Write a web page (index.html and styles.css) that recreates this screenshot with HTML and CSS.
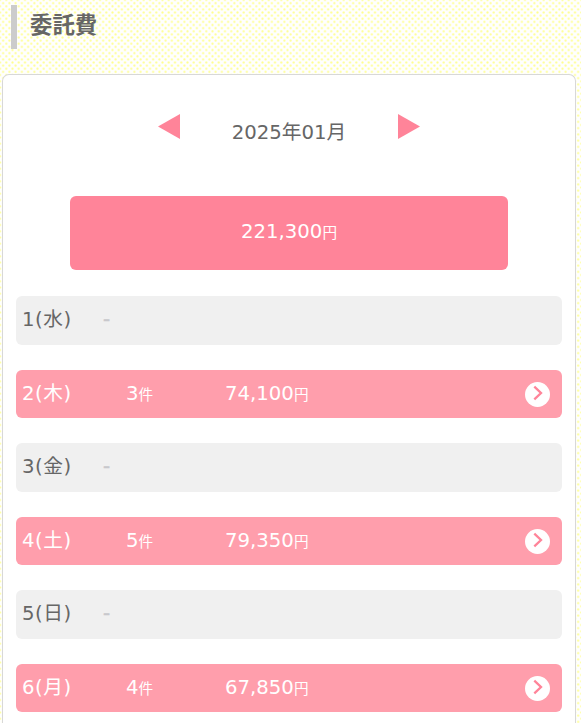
FILE: index.html
```html
<!DOCTYPE html>
<html lang="ja">
<head>
	<meta charset="utf-8">
	<title>委託費</title>
	<link rel="stylesheet" href="styles.css">
</head>
<body>
	<h1 class="title">委託費</h1>
	<div class="panel">
		<div class="month">
			<svg class="arrow" viewBox="0 0 22 25"><path d="M22 0V25L0 12.5Z"/></svg>
			<span class="month_text">2025年01月</span>
			<svg class="arrow" viewBox="0 0 22 25"><path d="M0 0V25L22 12.5Z"/></svg>
		</div>
		<div class="total">221,300<small>円</small></div>
		<div class="day">
			<span class="date">1(水)</span><span class="none">-</span>
		</div>
		<a class="day active">
			<span class="date">2(木)</span><span class="count">3<small>件</small></span><span class="price">74,100<small>円</small></span>
			<svg class="more" viewBox="0 0 25 25"><circle cx="12.5" cy="12.5" r="12.5"/><path d="M9.3 4.7L16 11L9.3 17.3"/></svg>
		</a>
		<div class="day">
			<span class="date">3(金)</span><span class="none">-</span>
		</div>
		<a class="day active">
			<span class="date">4(土)</span><span class="count">5<small>件</small></span><span class="price">79,350<small>円</small></span>
			<svg class="more" viewBox="0 0 25 25"><circle cx="12.5" cy="12.5" r="12.5"/><path d="M9.3 4.7L16 11L9.3 17.3"/></svg>
		</a>
		<div class="day">
			<span class="date">5(日)</span><span class="none">-</span>
		</div>
		<a class="day active">
			<span class="date">6(月)</span><span class="count">4<small>件</small></span><span class="price">67,850<small>円</small></span>
			<svg class="more" viewBox="0 0 25 25"><circle cx="12.5" cy="12.5" r="12.5"/><path d="M9.3 4.7L16 11L9.3 17.3"/></svg>
		</a>
	</div>
</body>
</html>
```
FILE: styles.css
```css
*
{
	box-sizing: border-box;
}
body
{
	margin: 0;
	padding: 5px 5px 0 2px;
	height: 723px;
	overflow: hidden;
	font-family: "DejaVu Sans", "Noto Sans CJK JP", sans-serif;
	font-size: 19.7px;
	color: #666;
	background-color: #fff;
	background-image: radial-gradient(circle, #ffff90 0.6px, transparent 1.5px), radial-gradient(circle, #ffff90 0.6px, transparent 1.5px);
	background-size: 6.25px 6.25px;
	background-position: 0 0, 3.125px 3.125px;
}
.title
{
	margin: 0 0 25px 9px;
	padding-left: 13px;
	height: 44px;
	border-left: 6px solid #ccc;
	font-size: 22.4px;
	line-height: 41px;
}
.panel
{
	height: 649px;
	padding: 38px 13px 0;
	background: #fff;
	border: 1px solid #d8d8d8;
	border-bottom: 0;
	border-radius: 7px 7px 0 0;
	overflow: hidden;
}
.month
{
	display: flex;
	justify-content: center;
	height: 83px;
}
.month_text
{
	width: 218px;
	text-align: center;
	line-height: 39px;
}
.arrow
{
	width: 22px;
	height: 25px;
	margin-top: 1px;
	fill: #ff8499;
}
.total
{
	width: 438px;
	height: 74px;
	margin: 0 auto 26px;
	line-height: 72px;
	text-align: center;
	color: #fff;
	background: #ff8499;
	border-radius: 6px;
}
small
{
	font-size: 14.6px;
}
.day
{
	display: flex;
	height: 49px;
	margin-bottom: 25px;
	padding: 0 12px 0 6px;
	line-height: 47px;
	background: #f0f0f0;
	border-radius: 6px;
}
.active
{
	height: 48px;
	color: #fff;
	background: #ff9eac;
}
.date
{
	width: 81px;
	letter-spacing: 0.5px;
}
.none
{
	color: #c8c8cc;
	-webkit-text-stroke: 0.5px #c8c8cc;
}
.count
{
	width: 99px;
	margin-left: 23px;
}
.more
{
	width: 25px;
	height: 25px;
	margin: 12px 0 0 auto;
	fill: #fff;
}
.more path
{
	fill: none;
	stroke: #ff8499;
	stroke-width: 2.3px;
}
```
